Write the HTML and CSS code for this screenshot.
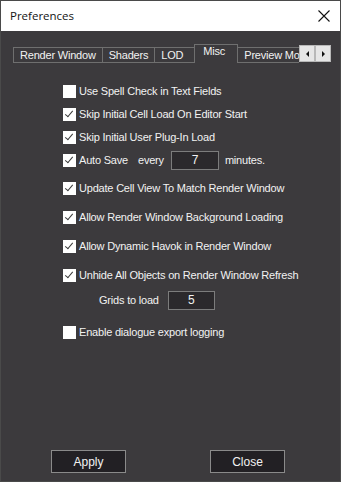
FILE: index.html
```html
<!DOCTYPE html>
<html lang="en">
<head>
    <meta charset="UTF-8">
    <meta name="viewport" content="width=device-width, initial-scale=1.0">
    <title>Preferences</title>
    <link rel="stylesheet" href="styles.css">
</head>
<body>
    <div class="window">
        <!-- Title bar -->
        <div class="titlebar">
            <span class="title">Preferences</span>
            <svg class="close" width="12" height="12" viewBox="0 0 12 12">
                <path d="M0.5 0.5 L11.5 11.5 M11.5 0.5 L0.5 11.5" stroke="#111" stroke-width="1.1" fill="none"/>
            </svg>
        </div>

        <!-- Tabs -->
        <div class="tab-row">
            <div class="tab-strip">
                <div class="tab">Render Window</div>
                <div class="tab">Shaders</div>
                <div class="tab">LOD</div>
                <div class="tab active">Misc</div>
                <div class="tab">Preview Model</div>
            </div>
            <div class="tab-arrows">
                <div class="arrow"><span class="tri left"></span></div>
                <div class="arrow"><span class="tri right"></span></div>
            </div>
        </div>

        <!-- Misc options -->
        <div class="options">
            <div class="row"><span class="check"></span>Use Spell Check in Text Fields</div>
            <div class="row gap-s"><span class="check on"></span>Skip Initial Cell Load On Editor Start</div>
            <div class="row gap-s"><span class="check on"></span>Skip Initial User Plug-In Load</div>
            <div class="row gap-s">
                <span class="check on"></span>Auto Save
                <span class="every">every</span>
                <span class="field autosave">7</span>
                <span class="unit">minutes.</span>
            </div>
            <div class="row gap-m"><span class="check on"></span>Update Cell View To Match Render Window</div>
            <div class="row gap-l"><span class="check on"></span>Allow Render Window Background Loading</div>
            <div class="row gap-l"><span class="check on"></span>Allow Dynamic Havok in Render Window</div>
            <div class="row gap-l"><span class="check on"></span>Unhide All Objects on Render Window Refresh</div>
            <div class="row gap-sub grids">
                Grids to load
                <span class="field">5</span>
            </div>
            <div class="row gap-xl"><span class="check"></span>Enable dialogue export logging</div>
        </div>

        <!-- Buttons -->
        <div class="footer">
            <button class="btn">Apply</button>
            <button class="btn">Close</button>
        </div>
    </div>
</body>
</html>
```

FILE: styles.css
```css
body {
    margin: 0;
    padding: 0;
    background-color: #3c3a3d;
    font-family: "Liberation Sans", Arial, sans-serif;
    font-size: 11px;
    color: #f2f2f2;
}

.window {
    width: 341px;
    height: 482px;
    box-sizing: border-box;
    border: 1px solid #4a4a4a;
    border-top: none;
    background-color: #3c3a3d;
    display: flex;
    flex-direction: column;
    overflow: hidden;
}

.titlebar {
    height: 31px;
    box-sizing: border-box;
    background-color: #fff;
    border-top: 1px solid #4a4a4a;
    display: flex;
    align-items: center;
    justify-content: space-between;
    padding: 0 10px 1px 9px;
}

.titlebar .title {
    font-family: "Open Sans", "Noto Sans", sans-serif;
    font-size: 11.5px;
    color: #141414;
}

.titlebar .close {
    margin-right: 0;
}

/* tabs */
.tab-row {
    display: flex;
    align-items: flex-start;
    margin: 13px 0 0 12px;
    height: 19px;
}

.tab-strip {
    display: flex;
    align-items: flex-start;
    width: 286px;
    height: 19px;
    overflow: hidden;
}

.tab {
    flex: none;
    box-sizing: border-box;
    min-width: 41px;
    height: 16px;
    margin-top: 3px;
    padding: 0 6px;
    border: 1px solid #6f6f6f;
    margin-right: -1px;
    line-height: 14px;
    letter-spacing: -0.2px;
    white-space: nowrap;
}

.tab.active {
    min-width: 44px;
    height: 18px;
    margin-top: 0;
    border-bottom: none;
    line-height: 13px;
    position: relative;
    z-index: 1;
    background-color: #3c3a3d;
    padding-left: 8px;
}

.tab-arrows {
    display: flex;
    margin-top: 1px;
}

.arrow {
    width: 16px;
    height: 17px;
    box-sizing: border-box;
    background-color: #e6e6e6;
    border: 1px solid #b8b8b8;
    display: flex;
    align-items: center;
    justify-content: center;
}

.tri {
    width: 0;
    height: 0;
    border-top: 3px solid transparent;
    border-bottom: 3px solid transparent;
}

.tri.left {
    border-right: 3px solid #111;
}

.tri.right {
    border-left: 3px solid #111;
}

/* options */
.options {
    display: flex;
    flex-direction: column;
    padding-left: 62px;
    margin-top: 18px;
}

.row {
    display: flex;
    align-items: center;
    height: 20px;
    letter-spacing: -0.2px;
    white-space: nowrap;
}

.row.gap-s { margin-top: 3px; }
.row.gap-m { margin-top: 8px; }
.row.gap-l { margin-top: 9px; }
.row.gap-sub { margin-top: 5px; }
.row.gap-xl { margin-top: 12px; }

.check {
    flex: none;
    width: 13px;
    height: 13px;
    box-sizing: border-box;
    background-color: #fff;
    margin-right: 3px;
    position: relative;
}

.check.on::after {
    content: "";
    position: absolute;
    left: 4px;
    top: 1px;
    width: 3px;
    height: 7px;
    border-right: 1.5px solid #3a3a3a;
    border-bottom: 1.5px solid #3a3a3a;
    transform: rotate(40deg);
}

.every {
    margin-left: 10px;
}

.field {
    width: 47px;
    height: 19px;
    box-sizing: border-box;
    border: 1px solid #7c7c7c;
    background-color: #2b292c;
    display: flex;
    align-items: center;
    justify-content: center;
    margin-left: 9px;
    font-size: 12px;
}

.field.autosave {
    width: 48px;
    margin-left: 7px;
}

.unit {
    margin-left: 6px;
}

.row.grids {
    padding-left: 36px;
}

/* footer */
.footer {
    margin-top: auto;
    margin-bottom: 8px;
    display: flex;
    gap: 84px;
    padding-left: 50px;
}

.btn {
    width: 75px;
    height: 23px;
    background-color: #222024;
    border: 1px solid #8a8a8a;
    color: #f2f2f2;
    font-family: "Liberation Sans", Arial, sans-serif;
    font-size: 12px;
    padding: 0;
}
```
